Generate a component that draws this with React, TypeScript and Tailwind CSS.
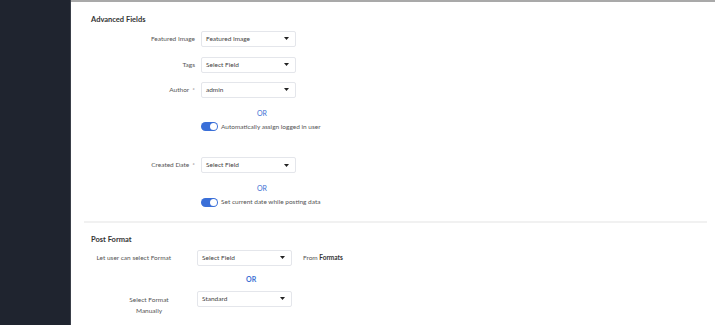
import React from 'react';

const font = { fontFamily: 'Lato, "Open Sans", sans-serif' };

const Caret = () => (
  <svg width="5" height="3" viewBox="0 0 5 3" className="shrink-0">
    <path d="M0 0h5L2.5 3z" fill="#222" />
  </svg>
);

const Select = ({ value, width = 'w-[95px]' }: { value: string; width?: string }) => (
  <div
    className={`${width} h-[16px] border border-[#e4e6eb] rounded-[2px] bg-white flex items-center justify-between pl-[4px] pr-[6px] text-[6.5px] text-[#444]`}
  >
    <span>{value}</span>
    <Caret />
  </div>
);

const Toggle = () => (
  <div className="w-[17px] h-[9px] rounded-full bg-[#3a6fd8] flex items-center justify-end pr-[1px]">
    <div className="w-[7px] h-[7px] rounded-full bg-white" />
  </div>
);

const Row = ({ label, value, required, className = '' }: { label: string; value: string; required?: boolean; className?: string }) => (
  <div className={`flex items-center gap-[6px] ${className}`}>
    <div className="w-[104px] text-right text-[6.5px] text-[#555]">
      {label}
      {required && <span className="ml-[3px] text-[#888]">*</span>}
    </div>
    <Select value={value} />
  </div>
);

const Or = ({ bold, className = '' }: { bold?: boolean; className?: string }) => (
  <div className={`text-[7px] text-[#3b6fd4] leading-none ${bold ? 'font-bold' : ''} ${className}`}>OR</div>
);

export default function App() {
  return (
    <div className="flex w-[715px] h-[325px] overflow-hidden bg-white" style={font}>
      <div className="w-[71px] h-full bg-[#1f242f] border-r border-[#3a3f49]" />
      <div className="flex-1 h-full border-t-2 border-[#a9a9a9] pl-[20px]">
        <div className="text-[7.5px] font-bold text-[#333] mt-[14px] leading-none">Advanced Fields</div>

        <Row label="Featured Image" value="Featured Image" className="mt-[7px]" />
        <Row label="Tags" value="Select Field" className="mt-[10px]" />
        <Row label="Author" value="admin" required className="mt-[9px]" />

        <Or className="mt-[12px] ml-[166px]" />
        <div className="flex items-center gap-[3px] ml-[110px] mt-[5px]">
          <Toggle />
          <span className="text-[6.5px] text-[#555]">Automatically assign logged in user</span>
        </div>

        <Row label="Created Date" value="Select Field" required className="mt-[26px]" />

        <Or className="mt-[12px] ml-[166px]" />
        <div className="flex items-center gap-[3px] ml-[110px] mt-[5px]">
          <Toggle />
          <span className="text-[6.5px] text-[#555]">Set current date while posting data</span>
        </div>

        <div className="mt-[14px] -ml-[7px] w-[623px] h-[2px] bg-[#f1f1f1]" />

        <div className="text-[7.5px] font-bold text-[#333] mt-[13px] leading-none">Post Format</div>

        <div className="flex items-center mt-[6px]">
          <div className="w-[80px] text-right text-[6.5px] text-[#555]">Let user can select Format</div>
          <div className="ml-[26px]">
            <Select value="Select Field" width="w-[95px]" />
          </div>
          <div className="ml-[11px] text-[6.5px] text-[#555]">
            From <span className="font-bold text-[#333]">Formats</span>
          </div>
        </div>

        <Or bold className="mt-[10px] ml-[155px]" />

        <div className="flex items-start mt-[8px]">
          <div className="w-[80px] flex justify-end">
            <div className="w-[44px] text-center text-[6.5px] text-[#555] leading-[11px] mt-[3px]">Select Format Manually</div>
          </div>
          <div className="ml-[26px]">
            <Select value="Standard" width="w-[95px]" />
          </div>
        </div>
      </div>
    </div>
  );
}
